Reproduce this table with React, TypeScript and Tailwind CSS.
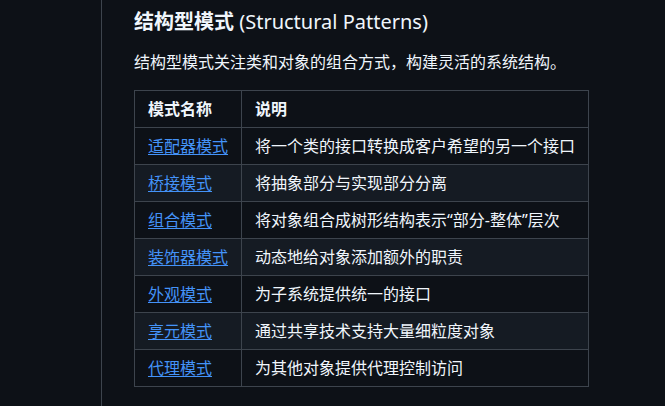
const rows: { name: string; desc: string }[] = [
  { name: "适配器模式", desc: "将一个类的接口转换成客户希望的另一个接口" },
  { name: "桥接模式", desc: "将抽象部分与实现部分分离" },
  { name: "组合模式", desc: "将对象组合成树形结构表示“部分-整体”层次" },
  { name: "装饰器模式", desc: "动态地给对象添加额外的职责" },
  { name: "外观模式", desc: "为子系统提供统一的接口" },
  { name: "享元模式", desc: "通过共享技术支持大量细粒度对象" },
  { name: "代理模式", desc: "为其他对象提供代理控制访问" },
];

export default function App() {
  return (
    <div
      className="flex h-[406px] w-[665px] overflow-hidden bg-[#0d1117] text-[#f0f6fc]"
      style={{ fontFamily: '"Noto Sans", "Noto Sans CJK SC", sans-serif' }}
    >
      <div className="w-[102px] shrink-0 border-r border-[#3d444d]" />
      <div className="flex-1 pl-[32px] pt-[9px]">
        <h3 className="text-[20px] font-semibold leading-[1.25]">
          结构型模式 <span className="font-normal">(Structural Patterns)</span>
        </h3>
        <p className="mt-4 text-[16px] leading-6">
          结构型模式关注类和对象的组合方式，构建灵活的系统结构。
        </p>
        <table className="mt-4 w-[455px] table-fixed border-collapse text-[16px] leading-6">
          <colgroup>
            <col className="w-[107px]" />
            <col />
          </colgroup>
          <thead>
            <tr className="bg-[#0d1117]">
              <th className="border border-[#3d444d] px-[13px] py-[6px] text-left font-semibold">模式名称</th>
              <th className="border border-[#3d444d] px-[13px] py-[6px] text-left font-semibold">说明</th>
            </tr>
          </thead>
          <tbody>
            {rows.map((r, i) => (
              <tr key={r.name} className={i % 2 === 1 ? "bg-[#151b23]" : "bg-[#0d1117]"}>
                <td className="whitespace-nowrap border border-[#3d444d] px-[13px] py-[6px]">
                  <a href="#" className="text-[#4493f8] underline underline-offset-2">
                    {r.name}
                  </a>
                </td>
                <td className="whitespace-nowrap border border-[#3d444d] px-[13px] py-[6px]">{r.desc}</td>
              </tr>
            ))}
          </tbody>
        </table>
      </div>
    </div>
  );
}
